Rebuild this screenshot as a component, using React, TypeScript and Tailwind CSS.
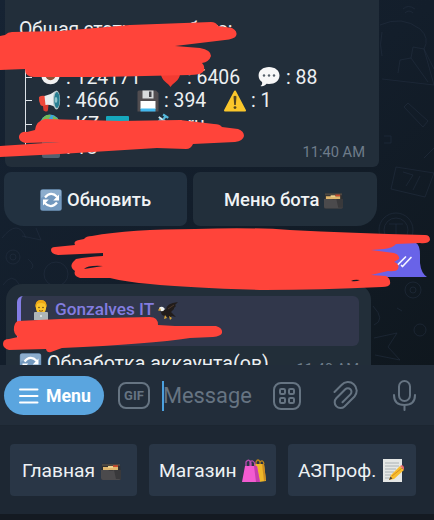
import React from "react";

type IconProps = { className?: string };

const Eye = ({ className }: IconProps) => (
  <svg className={className} viewBox="0 0 22 22"><ellipse cx="11" cy="10" rx="10" ry="9" fill="#f2f2f2" /><circle cx="11" cy="9" r="5.5" fill="#8a5136" /><circle cx="11" cy="8" r="3" fill="#241a1c" /></svg>
);
const Heart = ({ className }: IconProps) => (
  <svg className={className} viewBox="0 0 22 22"><path d="M11 21C9 17 1 14 1 7C1 1 9 0 11 5C13 0 21 1 21 7C21 14 13 17 11 21Z" fill="#f23b32" /></svg>
);
const Bubble = ({ className }: IconProps) => (
  <svg className={className} viewBox="0 0 22 22"><path d="M11 1C17 1 21.5 4.5 21.5 9.5S17 18 11 18L8.5 17.8C7 20 4.5 20.5 2.5 20C4 19 4.5 17.5 4 16C1.8 14.5.6 12.3.6 9.5C.6 4.5 5 1 11 1Z" fill="#f7f7f7" /><circle cx="6" cy="9.5" r="1.2" fill="#55606a" /><circle cx="11" cy="9.5" r="1.2" fill="#55606a" /><circle cx="16" cy="9.5" r="1.2" fill="#55606a" /></svg>
);
const Megaphone = ({ className }: IconProps) => (
  <svg className={className} viewBox="0 0 22 22"><path d="M4 13L10 14L9.5 20Q9 22 7 21.5L5 20.5Z" fill="#d83a30" /><path d="M.5 7Q3 5 7 6L8 15Q4 17 2 15Q0 11 .5 7Z" fill="#ee493b" /><path d="M6 6Q12 5 17 1L19 19Q13 14 7 15Z" fill="#e9eef0" /><ellipse cx="18" cy="10" rx="3.6" ry="9.5" fill="#b7c8cc" /><ellipse cx="18.4" cy="10" rx="2.7" ry="8" fill="#267d91" /><ellipse cx="17.5" cy="10" rx="1.4" ry="3" fill="#8cc5cc" /></svg>
);
const Floppy = ({ className }: IconProps) => (
  <svg className={className} viewBox="0 0 22 22"><path d="M2 .5H19L21.5 3V21.5H.5V2Q.5.5 2 .5Z" fill="#514d50" /><path d="M5.5.5H16.5V8.5H5.5Z" fill="#d8dadb" /><path d="M12 1.5H14.5V7H12Z" fill="#434247" /><path d="M3.5 11H18.5V19H3.5Z" fill="#fff" /><path d="M3.5 18.5H18.5V21.5H3.5Z" fill="#42b8ef" /></svg>
);
const Warning = ({ className }: IconProps) => (
  <svg className={className} viewBox="0 0 22 22"><path d="M11 1.5L21 20.5H1Z" fill="#fbc72b" stroke="#fbc72b" strokeWidth="2" strokeLinejoin="round" /><path d="M9.5 6.5Q11 5 12.5 6.5L11.8 15H10.2Z" fill="#55451f" /><circle cx="11" cy="17.6" r="1.4" fill="#55451f" /></svg>
);
const Globe = ({ className }: IconProps) => (
  <svg className={className} viewBox="0 0 22 22"><circle cx="11" cy="11" r="10.5" fill="#3da8df" /><path d="M2 7Q5 0 12 1L10 5L7 7L8 12L4 14Q0 11 2 7ZM14 2Q21 4 21 10L17 9L14 6Z" fill="#75b956" /></svg>
);
const Syringe = ({ className }: IconProps) => (
  <svg className={className} viewBox="0 0 22 22"><path d="M0 17L10 5L17 9L9 20Z" fill="#4db7df" /><path d="M9 3L19 10" stroke="#d1e7ee" strokeWidth="2.2" /><path d="M14 6L17 2M14 0L20 4" stroke="#55b9dc" strokeWidth="2.5" /></svg>
);
const Refresh = ({ className }: IconProps) => (
  <svg className={className} viewBox="0 0 22 22"><rect x=".3" y=".3" width="21.4" height="21.4" rx="2.5" fill="#7399bf" /><path d="M1 2Q1 1 2 1H20Q21 1 21 2V7Q10 3 1 9Z" fill="#9ab8d4" opacity=".65" /><path d="M5 8.5Q11 1.5 17.3 8M17 13.5Q11 20.5 4.7 14" fill="none" stroke="#fff" strokeWidth="2.3" /><path d="M19 5.5V11.5H13.2ZM3 16.5V10.5H8.8Z" fill="#fff" /></svg>
);
const CardBox = ({ className }: IconProps) => (
  <svg className={className} viewBox="0 0 20 17"><path d="M1 .8H19L20 15Q20 17 18 17H2Q0 17 0 15Z" fill="#302f30" /><path d="M1 1H19V3H1Z" fill="#4c4843" /><path d="M2 4H17V7H2Z" fill="#dfb66d" /><path d="M7 3H12V5H7Z" fill="#efd18c" /><path d="M12 2.2H17V4H12Z" fill="#c94a2d" /><path d="M0 7H7Q10 8 13 7H20V15Q20 17 18 17H2Q0 17 0 15Z" fill="#4b4a4c" /><path d="M13 7H20V16H15Z" fill="#39393b" /></svg>
);
const Technologist = ({ className }: IconProps) => (
  <svg className={className} viewBox="0 0 16 20"><path d="M1 20V15Q2 11 8 11T15 15V20Z" fill="#567d8c" /><path d="M3 6Q3 0 8 0T13 6V9Q12 14 8 14T3 9Z" fill="#fbc52c" /><path d="M2.5 8Q1.5 0 8 0T13.5 8L12 4Q8 2 4 4Z" fill="#eda816" /><circle cx="6" cy="7.5" r=".8" fill="#63451d" /><circle cx="10" cy="7.5" r=".8" fill="#63451d" /><path d="M6 10.5Q8 12 10 10.5" fill="none" stroke="#875821" /><rect x="1" y="12" width="14" height="9" rx="1" fill="#aeb5b9" /><circle cx="8" cy="16" r="1" fill="#e9eef0" /></svg>
);
const Eagle = ({ className }: IconProps) => (
  <svg className={className} viewBox="0 0 20 18"><path d="M2 6Q6 5 8 8Q8 1 20 0L17 3L18 4L16 6L16 7L13 10L18 15L14 14L11 16L8 14Q3 14 3 10Z" fill="#211c1b" /><path d="M1 7Q1 4 5 5L7 7Q5 10 3 9Z" fill="#edf0ef" /><path d="M2 6L0 8L1 9L3 8ZM7 13L6 17L9 16ZM11 14L12 18L14 16Z" fill="#d4a338" /><path d="M10 7L16 3" stroke="#57402f" strokeWidth=".8" /></svg>
);
const Bags = ({ className }: IconProps) => (
  <svg className={className} viewBox="0 0 24 24"><path d="M14 7V3Q16-1 18 3V7M18 6V3Q21 0 22 5" fill="none" stroke="#bd871c" strokeWidth="1.3" /><path d="M12 5H22L24 22L17 23Z" fill="#eeb629" /><path d="M20 5L22 22L24 21L22 5Z" fill="#cb8c22" /><path d="M4 9V3Q7-1 9 4V9M8 8V3Q11 0 13 5V9" fill="none" stroke="#ba4bb1" strokeWidth="1.3" /><path d="M3 7H15L18 23H0Z" fill="#f25bd0" /><path d="M12 7H15L18 23H14Z" fill="#c73dac" /></svg>
);
const Memo = ({ className }: IconProps) => (
  <svg className={className} viewBox="0 0 22 24"><path d="M1 0H20V23H1Z" fill="#e5e7e5" /><path d="M3 4H17M3 7H17M3 10H14M3 13H12M3 16H9M3 19H8" stroke="#9da6aa" strokeWidth=".8" /><path d="M7 21L9 16L18 7L22 11L12 20Z" fill="#f8bd2e" /><path d="M10 17L20 9" stroke="#d78d20" /><path d="M18 7L20 6Q23 8 22 11Z" fill="#e56b70" /><path d="M7 21L8.5 17.5L10.5 19.5Z" fill="#50413b" /></svg>
);

function Doodles() {
  return (
    <svg className="absolute inset-0 h-full w-full" viewBox="0 0 434 365" fill="none" stroke="#263243" strokeOpacity=".5" strokeWidth="1">
      <path d="M380 25Q402 15 420 29Q430 38 424 49L434 85L382 79M382 32Q379 45 382 56M424 49L413 47L411 58L400 60L398 73M424 49L434 69M411 58L428 82" />
      <path d="M403 9Q408 4 415 9M405 13Q409 9 413 13M404 107L423 127L428 121L408 103ZM384 136H391V143H384M434 148L424 158" />
      <path d="M396 167L434 173L425 197L391 189ZM403 172L413 175L406 186M420 176L413 190" />
      <circle cx="396" cy="230" r="17" /><circle cx="396" cy="230" r="12" /><path d="M389 224H403M396 224V240" />
      <circle cx="13" cy="257" r="7" /><circle cx="13" cy="257" r="3" /><circle cx="56" cy="274" r="12" /><path d="M2 238Q18 218 26 238M22 236L41 240L36 228M3 285Q12 272 19 284M28 259Q36 266 31 269" />
      <circle cx="413" cy="290" r="8" /><circle cx="413" cy="290" r="3" /><circle cx="420" cy="330" r="6" /><path d="M373 306Q386 320 374 325M374 338L397 333L388 347L400 360L375 355M397 308L402 311" />
    </svg>
  );
}

function Redactions() {
  return (
    <svg className="pointer-events-none absolute inset-0 h-[520px] w-[434px]" viewBox="0 0 434 520" fill="#ff443a">
      <path d="M0 36L5 35Q8 32 12 32L60 31L130 25L211 22Q216 22 218 26L232 28Q238 31 236 36Q234 39 225 40L175 46L200 48Q211 50 211 56Q209 62 202 63Q206 67 203 72Q200 75 190 75L100 77H34Q25 77 25 69L0 70Z" />
      <path d="M0 146L60 142L25 143Q18 141 19 136Q21 131 27 132L35 130Q36 121 45 119L120 121L180 120L214 124Q220 124 222 127L238 129Q244 131 244 136Q243 141 235 142L193 144Q191 149 186 149L157 148L60 154L0 157Z" />
      <path fillRule="evenodd" d="M55 247L75 245Q73 241 79 240L84 239Q86 236 92 236Q130 229 195 229Q250 227 290 230Q350 233 425 235Q430 235 430 240Q428 244 420 243L396 244Q393 248 384 249L371 250L394 253Q400 255 399 259L394 262Q400 264 398 269Q396 272 388 271L371 275L386 276Q391 279 390 284Q389 287 382 287Q320 290 265 290Q190 288 150 284Q127 282 110 278L80 278Q73 276 75 271Q69 267 73 262L76 259Q87 257 103 256V253L58 255Q51 254 51 250Q51 247 55 247ZM84 269L103 266Q88 265 84 269ZM351 281Q356 282 360 280Q354 279 351 281Z" />
      <path d="M18 321L60 319L150 317Q158 317 158 325L175 326H216Q223 328 222 333Q221 336 213 337L190 338Q150 344 62 348L51 352Q47 353 46 349L9 350Q3 348 3 344Q3 339 9 339L18 337Q13 333 14 327Q15 322 18 321Z" />
    </svg>
  );
}

const StatRow = ({ children }: { children: React.ReactNode }) => (
  <div className="flex h-[23.5px] items-center whitespace-pre">
    <div className="h-full w-[7px] shrink-0 border-l border-[#dce2e7] pt-[11px]"><div className="h-px bg-[#dce2e7]" /></div>
    {children}
  </div>
);

function ChatArea() {
  return (
    <main className="relative h-[365px] overflow-hidden bg-gradient-to-br from-[#162333] via-[#131e2b] to-[#0f171e]">
      <Doodles />
      <div className="relative flex flex-col">
        <section className="ml-[5px] h-[167px] w-[374px] rounded-b-[6px] bg-[#222e3a] pl-[20px] pt-[18px] text-[19.4px] leading-[23px] text-[#edf0f2]">
          <div className="-ml-[6px] h-[23px] whitespace-nowrap tracking-[-0.25px]">Общая статистика бота:</div>
          <div className="h-[24.5px]" />
          <StatRow>
            <Eye className="ml-[8px] h-[20px] w-[21px] shrink-0" /><span className="ml-[5px] w-[93px] shrink-0">: 124171</span>
            <Heart className="h-[21px] w-[23px] shrink-0" /><span className="ml-[5px] w-[71px] shrink-0">: 6406</span>
            <Bubble className="h-[22px] w-[22px] shrink-0" /><span className="ml-[6px]">: 88</span>
          </StatRow>
          <StatRow>
            <Megaphone className="ml-[6px] h-[22px] w-[23px] shrink-0" /><span className="ml-[5px] w-[71px] shrink-0">: 4666</span>
            <Floppy className="h-[22px] w-[22px] shrink-0" /><span className="ml-[5px] w-[60px] shrink-0">: 394</span>
            <Warning className="h-[22px] w-[22px] shrink-0" /><span className="ml-[5px]">: 1</span>
          </StatRow>
          <StatRow>
            <Globe className="ml-[7px] h-[21px] w-[22px] shrink-0" /><span className="ml-[5px] w-[40px] shrink-0">: KZ</span>
            <div className="h-[16px] w-[23px] shrink-0 rounded-[1px] bg-[#16a8bd]" />
            <Syringe className="ml-[22px] h-[22px] w-[19px] shrink-0" /><span className="ml-[8px]">: ru</span>
          </StatRow>
          <div className="flex h-[23px] items-center whitespace-pre">
            <div className="h-[11px] w-[17px] shrink-0 self-start border-b border-l border-[#dce2e7]" />
            <div className="mt-[2px] h-[18px] w-[18px] rounded-[2px] bg-[#536170]" /><span className="ml-[6px]">: 18</span>
            <time className="ml-auto mr-[14px] mt-[9px] text-[14.7px] text-[#6e7c8a]">11:40 AM</time>
          </div>
        </section>

        <div className="ml-[4px] mt-[5px] flex h-[54px] w-[373px] gap-[6px] text-[18.4px] font-medium text-[#f0f3f5]">
          <button className="flex w-[183px] items-center rounded-[7px] rounded-bl-[20px] bg-[#223140] pl-[36px] pt-[2px]">
            <Refresh className="mr-[5px] h-[22px] w-[22px]" />Обновить
          </button>
          <button className="flex w-[184px] items-center whitespace-nowrap rounded-[7px] rounded-br-[20px] bg-[#222f3b] pl-[31px] pt-[2px]">
            Меню бота<CardBox className="ml-[5px] h-[17px] w-[19px]" />
          </button>
        </div>

        <div className="flex h-[58px] justify-end pr-[7px] pt-[17px]">
          <svg className="h-[34px] w-[90px]" viewBox="0 0 90 34">
            <path d="M0 0H79Q83 2 83 12V20Q84 30 90 34H0Z" fill="#6963e8" />
            <path d="M60.5 22L68.5 14M65.5 23.5L74 14.5M65.5 23.5L64.5 22.5" fill="none" stroke="#f5f5ff" strokeWidth="1.7" strokeLinecap="round" />
          </svg>
        </div>

        <section className="ml-[6px] h-[100px] w-[365px] rounded-t-[16px] bg-[#222e39] pl-[11px] pt-[12px]">
          <div className="h-[50px] w-[342px] rounded-[6px] border-l-[4px] border-[#837de4] bg-[#31374b]">
            <div className="flex h-[28px] items-center pl-[12px] text-[17.2px] font-medium text-[#837de0]">
              <Technologist className="h-[20px] w-[16px]" /><span className="ml-[6px]">Gonzalves IT</span><Eagle className="ml-[4px] mt-[2px] h-[18px] w-[20px]" />
            </div>
          </div>
          <div className="flex h-[30px] items-start pt-[6px] text-[19.6px] leading-[24px] text-[#edf0f2]">
            <Refresh className="ml-[2px] mt-px h-[22px] w-[23px] shrink-0" /><span className="ml-[5px] whitespace-nowrap">Обработка аккаунта(ов)</span>
            <time className="ml-auto mr-[12px] mt-[5px] whitespace-nowrap text-[14.7px] text-[#6e7c8a]">11:40 AM</time>
          </div>
        </section>
      </div>
    </main>
  );
}

function InputBar() {
  return (
    <div className="flex h-[61px] items-center border-b border-[#1c2631] bg-[#222d3a] pl-[4px] pt-px text-[#667482]">
      <button className="flex h-[39px] w-[100px] items-center rounded-full bg-[#5aa5df] pl-[15px] pt-px text-[17.7px] font-bold text-white">
        <svg className="mr-[7px] h-[16px] w-[20px]" viewBox="0 0 20 16" stroke="currentColor" strokeWidth="2" strokeLinecap="round"><path d="M1 1.5H18.5M1 8H18.5M1 14.5H18.5" /></svg>Menu
      </button>
      <div className="ml-[14px] flex h-[27px] w-[32px] items-center justify-center rounded-[8px] border-2 border-[#667482] pt-px text-[13px] font-bold">GIF</div>
      <div className="ml-[12px] h-[30px] w-[2px] bg-[#4ba1df]" />
      <div className="-ml-px w-[110px] text-[21.8px] leading-[28px]">Message</div>
      <svg className="h-[28px] w-[28px]" viewBox="0 0 28 28" fill="none" stroke="currentColor" strokeWidth="2"><rect x="1" y="1" width="26" height="26" rx="7" /><rect x="7" y="7" width="5" height="5" rx="1.3" /><rect x="16" y="7" width="5" height="5" rx="1.3" /><rect x="7" y="16" width="5" height="5" rx="1.3" /><rect x="16" y="16" width="5" height="5" rx="1.3" /></svg>
      <svg className="ml-[32px] h-[29px] w-[26px]" viewBox="0 0 26 29" fill="none" stroke="currentColor" strokeWidth="2" strokeLinecap="round"><path d="M1.5 11L8.5 4A8.5 8.5 0 0 1 21.5 15.5L11.5 25.5A5.8 5.8 0 0 1 3.3 17.3L12.3 8.3A3.6 3.6 0 0 1 17.4 13.4L9.5 21.3" /></svg>
      <svg className="ml-[34px] h-[31px] w-[23px]" viewBox="0 0 23 31" fill="none" stroke="currentColor" strokeWidth="2" strokeLinecap="round"><rect x="6" y="1" width="11" height="20" rx="5.5" /><path d="M1 15Q1 25 11.5 25T22 15M11.5 25V30" /></svg>
    </div>
  );
}

export default function App() {
  return (
    <div className="relative h-[520px] w-[434px] overflow-hidden bg-[#141a22] font-['Roboto','Noto_Sans',sans-serif]">
      <ChatArea />
      <InputBar />
      <div className="flex h-[88px] gap-[12px] bg-[#1d2733] pl-[10px] pt-[18px] text-[19.2px] text-[#edf1f4]">
        <button className="flex h-[52px] w-[127px] items-center rounded-[4px] bg-[#293646] pl-[12px] pt-[2px]">Главная<CardBox className="ml-[6px] h-[17px] w-[20px]" /></button>
        <button className="flex h-[52px] w-[127px] items-center rounded-[4px] bg-[#293646] pl-[10px] pt-[2px]">Магазин<Bags className="ml-[5px] h-[24px] w-[24px]" /></button>
        <button className="flex h-[52px] w-[128px] items-center whitespace-nowrap rounded-[4px] bg-[#293646] pl-[10px] pt-[2px]">АЗПроф.<Memo className="ml-[6px] h-[24px] w-[22px]" /></button>
      </div>
      <Redactions />
    </div>
  );
}
